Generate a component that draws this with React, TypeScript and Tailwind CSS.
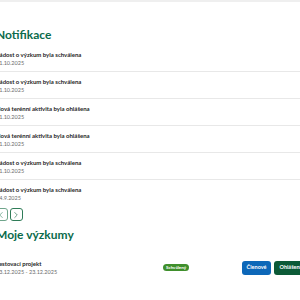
import { ChevronLeft, ChevronRight } from "lucide-react";

const notifications = [
  { title: "Žádost o výzkum byla schválena", date: "01.10.2025" },
  { title: "Žádost o výzkum byla schválena", date: "01.10.2025" },
  { title: "Nová terénní aktivita byla ohlášena", date: "01.10.2025" },
  { title: "Nová terénní aktivita byla ohlášena", date: "01.10.2025" },
  { title: "Žádost o výzkum byla schválena", date: "01.10.2025" },
  { title: "Žádost o výzkum byla schválena", date: "24.9.2025" },
];

export default function App() {
  return (
    <div className="w-[300px] h-[300px] overflow-hidden bg-white font-['Lato',sans-serif] border-t-2 border-[#efefef]">
      <div className="-ml-[4px] w-[310px]">
        <h2 className="mt-[26px] text-[12px] leading-[14px] font-bold text-[#0b6b4b]">Notifikace</h2>

        <div className="mt-[3px] divide-y divide-[#e8e8e8]">
          {notifications.map((n, i) => (
            <div key={i} className="pt-[5px] pb-[4px]">
              <div className="text-[6px] leading-[9px] font-bold text-[#1f1f1f]">{n.title}</div>
              <div className="text-[5.5px] leading-[8px] text-[#6b6b6b]">{n.date}</div>
            </div>
          ))}
        </div>

        <div className="mt-[2px] -ml-[1px] flex gap-[2.5px]">
          <button className="w-[12.5px] h-[13px] flex items-center justify-center rounded-[3px] border border-[#6fa58b] bg-white text-[#3d8a66]">
            <ChevronLeft size={10} strokeWidth={1.5} />
          </button>
          <button className="w-[12.5px] h-[13px] flex items-center justify-center rounded-[3px] border border-[#2f7c58] bg-white text-[#1d6a47]">
            <ChevronRight size={10} strokeWidth={1.5} />
          </button>
        </div>

        <h2 className="mt-[7px] text-[12px] leading-[14px] font-bold text-[#0b6b4b]">Moje výzkumy</h2>

        <div className="mt-[17px] flex items-center">
          <div className="w-[167px]">
            <div className="text-[6px] leading-[9px] font-bold text-[#1f1f1f]">Testovací projekt</div>
            <div className="text-[5.5px] leading-[8px] text-[#6b6b6b]">23.12.2025 - 23.12.2025</div>
          </div>
          <span className="rounded-full bg-[#3f8f2c] px-[3px] py-[1px] text-[4.5px] leading-[5px] font-bold text-white">
            Schválený
          </span>
          <div className="ml-auto flex gap-[3px]">
            <button className="h-[14px] px-[5px] rounded-[3px] bg-[#0d67b8] text-[5.5px] font-bold text-white">
              Členové
            </button>
            <button className="h-[14px] px-[5px] rounded-[3px] bg-[#0c5a37] text-[5.5px] font-bold text-white">
              Ohlášení
            </button>
          </div>
        </div>
      </div>
    </div>
  );
}
